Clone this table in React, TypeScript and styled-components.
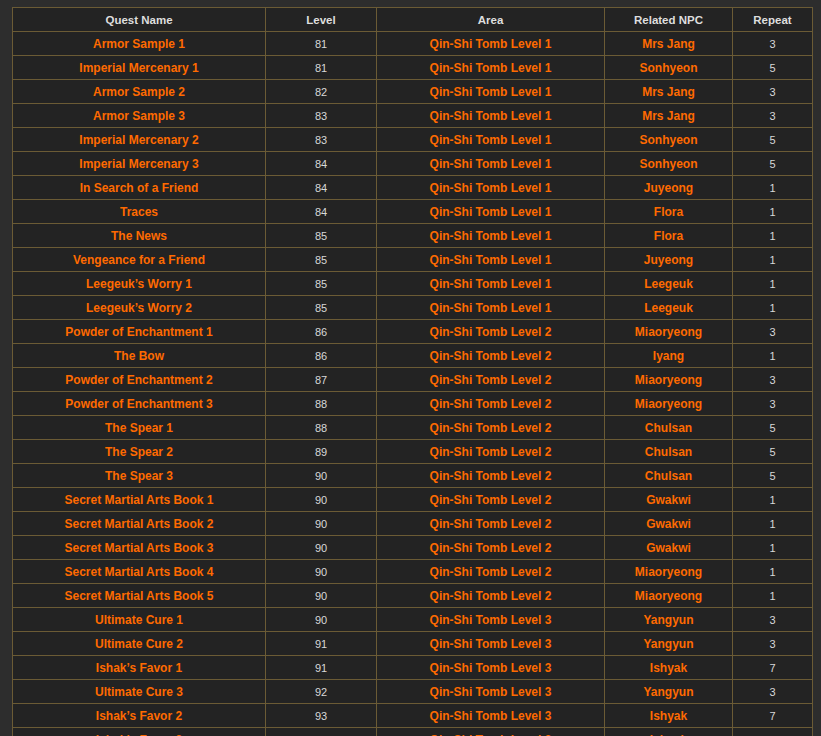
import React from "react";
import styled, { createGlobalStyle } from "styled-components";

const Global = createGlobalStyle`
  html, body { margin: 0; padding: 0; background: #2d2d2d; }
  body { font-family: Tahoma, "Liberation Sans", Arial, sans-serif; }
`;

const Page = styled.div`
  padding: 7px 10px 0 12px;
`;

const Table = styled.table`
  border-collapse: collapse;
  width: 800px;
  table-layout: fixed;
  font-size: 11px;
  background: #232323;
`;

const Th = styled.th`
  height: 23px;
  padding: 0;
  border: 1px solid #6b5b35;
  color: #dedede;
  font-size: 11.5px;
  font-weight: bold;
  text-align: center;
`;

const Td = styled.td<{ $accent?: boolean }>`
  height: 23px;
  padding: 0;
  border: 1px solid #6b5b35;
  text-align: center;
  color: ${(p) => (p.$accent ? "#ff6a00" : "#d8d8d8")};
  font-size: ${(p) => (p.$accent ? "12px" : "11px")};
  font-weight: ${(p) => (p.$accent ? "bold" : "normal")};
  white-space: nowrap;
`;

type Row = [string, number, string, string, number];

const rows: Row[] = [
  ["Armor Sample 1", 81, "Qin-Shi Tomb Level 1", "Mrs Jang", 3],
  ["Imperial Mercenary 1", 81, "Qin-Shi Tomb Level 1", "Sonhyeon", 5],
  ["Armor Sample 2", 82, "Qin-Shi Tomb Level 1", "Mrs Jang", 3],
  ["Armor Sample 3", 83, "Qin-Shi Tomb Level 1", "Mrs Jang", 3],
  ["Imperial Mercenary 2", 83, "Qin-Shi Tomb Level 1", "Sonhyeon", 5],
  ["Imperial Mercenary 3", 84, "Qin-Shi Tomb Level 1", "Sonhyeon", 5],
  ["In Search of a Friend", 84, "Qin-Shi Tomb Level 1", "Juyeong", 1],
  ["Traces", 84, "Qin-Shi Tomb Level 1", "Flora", 1],
  ["The News", 85, "Qin-Shi Tomb Level 1", "Flora", 1],
  ["Vengeance for a Friend", 85, "Qin-Shi Tomb Level 1", "Juyeong", 1],
  ["Leegeuk’s Worry 1", 85, "Qin-Shi Tomb Level 1", "Leegeuk", 1],
  ["Leegeuk’s Worry 2", 85, "Qin-Shi Tomb Level 1", "Leegeuk", 1],
  ["Powder of Enchantment 1", 86, "Qin-Shi Tomb Level 2", "Miaoryeong", 3],
  ["The Bow", 86, "Qin-Shi Tomb Level 2", "Iyang", 1],
  ["Powder of Enchantment 2", 87, "Qin-Shi Tomb Level 2", "Miaoryeong", 3],
  ["Powder of Enchantment 3", 88, "Qin-Shi Tomb Level 2", "Miaoryeong", 3],
  ["The Spear 1", 88, "Qin-Shi Tomb Level 2", "Chulsan", 5],
  ["The Spear 2", 89, "Qin-Shi Tomb Level 2", "Chulsan", 5],
  ["The Spear 3", 90, "Qin-Shi Tomb Level 2", "Chulsan", 5],
  ["Secret Martial Arts Book 1", 90, "Qin-Shi Tomb Level 2", "Gwakwi", 1],
  ["Secret Martial Arts Book 2", 90, "Qin-Shi Tomb Level 2", "Gwakwi", 1],
  ["Secret Martial Arts Book 3", 90, "Qin-Shi Tomb Level 2", "Gwakwi", 1],
  ["Secret Martial Arts Book 4", 90, "Qin-Shi Tomb Level 2", "Miaoryeong", 1],
  ["Secret Martial Arts Book 5", 90, "Qin-Shi Tomb Level 2", "Miaoryeong", 1],
  ["Ultimate Cure 1", 90, "Qin-Shi Tomb Level 3", "Yangyun", 3],
  ["Ultimate Cure 2", 91, "Qin-Shi Tomb Level 3", "Yangyun", 3],
  ["Ishak’s Favor 1", 91, "Qin-Shi Tomb Level 3", "Ishyak", 7],
  ["Ultimate Cure 3", 92, "Qin-Shi Tomb Level 3", "Yangyun", 3],
  ["Ishak’s Favor 2", 93, "Qin-Shi Tomb Level 3", "Ishyak", 7],
  ["Ishak’s Favor 3", 94, "Qin-Shi Tomb Level 3", "Ishyak", 7],
];

export default function App() {
  return (
    <Page>
      <Global />
      <Table>
        <colgroup>
          <col style={{ width: 253 }} />
          <col style={{ width: 111 }} />
          <col style={{ width: 228 }} />
          <col style={{ width: 128 }} />
          <col style={{ width: 80 }} />
        </colgroup>
        <thead>
          <tr>
            <Th>Quest Name</Th>
            <Th>Level</Th>
            <Th>Area</Th>
            <Th>Related NPC</Th>
            <Th>Repeat</Th>
          </tr>
        </thead>
        <tbody>
          {rows.map((r, i) => (
            <tr key={i}>
              <Td $accent>{r[0]}</Td>
              <Td>{r[1]}</Td>
              <Td $accent>{r[2]}</Td>
              <Td $accent>{r[3]}</Td>
              <Td>{r[4]}</Td>
            </tr>
          ))}
        </tbody>
      </Table>
    </Page>
  );
}
